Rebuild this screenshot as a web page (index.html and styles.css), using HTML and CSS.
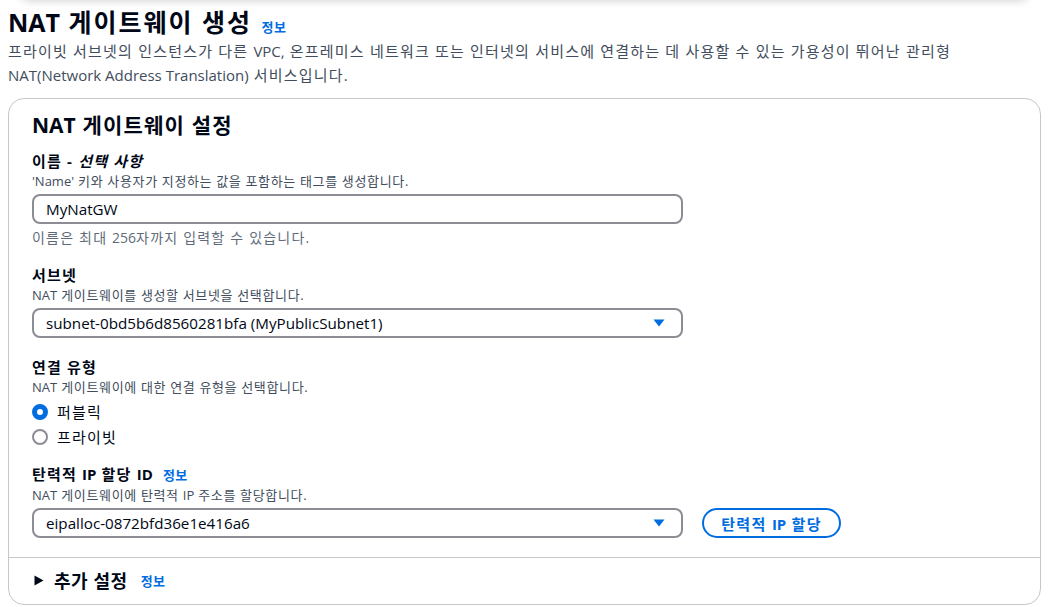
FILE: index.html
```html
<!DOCTYPE html>
<html lang="ko">
<head>
<meta charset="utf-8">
<link rel="stylesheet" href="styles.css">
</head>
<body>
<div class="page">
  <div class="top-shadow"></div>
  <header class="page-header">
    <h1 class="page-title"><span class="lat">NAT</span> 게이트웨이 생성 <a class="info" href="#">정보</a></h1>
    <p class="page-desc">프라이빗 서브넷의 인스턴스가 다른 <span class="lat">VPC,</span> 온프레미스 네트워크 또는 인터넷의 서비스에 연결하는 데 사용할 수 있는 가용성이 뛰어난 관리형 <span class="lat">NAT(Network Address Translation)</span> 서비스입니다.</p>
  </header>

  <section class="card">
    <div class="card-body">
      <h2 class="card-title"><span class="lat">NAT</span> 게이트웨이 설정</h2>

      <div class="field">
        <div class="label">이름 - <i>선택 사항</i></div>
        <div class="desc"><span class="lat">'Name'</span> 키와 사용자가 지정하는 값을 포함하는 태그를 생성합니다.</div>
        <div class="input"><span class="lat">MyNatGW</span></div>
        <div class="hint">이름은 최대 <span class="lat">256</span>자까지 입력할 수 있습니다.</div>
      </div>

      <div class="field">
        <div class="label">서브넷</div>
        <div class="desc"><span class="lat">NAT</span> 게이트웨이를 생성할 서브넷을 선택합니다.</div>
        <div class="input select">
          <span class="lat">subnet-0bd5b6d8560281bfa (MyPublicSubnet1)</span>
          <svg class="caret" width="12" height="8" viewBox="0 0 12 8"><path d="M0.5 0.5h11L6 7.5z" fill="#006ce0"/></svg>
        </div>
      </div>

      <div class="field">
        <div class="label">연결 유형</div>
        <div class="desc"><span class="lat">NAT</span> 게이트웨이에 대한 연결 유형을 선택합니다.</div>
        <div class="radios">
          <div class="radio"><span class="dot checked"></span>퍼블릭</div>
          <div class="radio"><span class="dot"></span>프라이빗</div>
        </div>
      </div>

      <div class="field">
        <div class="label">탄력적 <span class="lat">IP</span> 할당 <span class="lat">ID</span> <a class="info" href="#">정보</a></div>
        <div class="desc"><span class="lat">NAT</span> 게이트웨이에 탄력적 <span class="lat">IP</span> 주소를 할당합니다.</div>
        <div class="row">
          <div class="input select">
            <span class="lat">eipalloc-0872bfd36e1e416a6</span>
            <svg class="caret" width="12" height="8" viewBox="0 0 12 8"><path d="M0.5 0.5h11L6 7.5z" fill="#006ce0"/></svg>
          </div>
          <button class="btn">탄력적 <span class="lat">IP</span> 할당</button>
        </div>
      </div>
    </div>
    <div class="card-footer">
      <svg class="expand" width="10" height="11" viewBox="0 0 10 11"><path d="M0.5 0.5L9.5 5.5L0.5 10.5z" fill="#000716"/></svg>
      <span class="footer-title">추가 설정</span>
      <a class="info" href="#">정보</a>
    </div>
  </section>
</div>
</body>
</html>
```

FILE: styles.css
```css
* { box-sizing: border-box; }
html, body { margin: 0; padding: 0; background: #fff; }
body {
  font-family: "Open Sans", "Noto Sans CJK KR", sans-serif;
  color: #000716;
  font-size: 15px;
  letter-spacing: 0.08em;
}
.lat { letter-spacing: 0; }
.page { padding: 0 9px 0 8px; overflow: hidden; height: 607px; }
.top-shadow {
  height: 10px;
  margin: -10px 12px 0;
  border-radius: 0 0 16px 16px;
  box-shadow: 0 1px 8px rgba(0, 7, 22, 0.18);
}
.page-header { padding-top: 7px; }
.page-title {
  margin: 0;
  font-size: 25px;
  line-height: 30px;
  font-weight: 700;
  letter-spacing: 0.08em;
}
.info {
  color: #006ce0;
  font-size: 13px;
  font-weight: 700;
  text-decoration: none;
  margin-left: 5px;
  letter-spacing: 0.04em;
}
.page-title .info { margin-left: 1px; }
.page-desc {
  margin: -3px 0 0;
  color: #414d5c;
  font-size: 15px;
  line-height: 24px;
  max-width: 970px;
}
.card {
  margin-top: 11px;
  border: 1px solid #c6c6cd;
  border-radius: 16px;
}
.card-body { padding: 13px 23px 19px; }
.card-title {
  margin: 0 0 12px;
  font-size: 21px;
  line-height: 26px;
  font-weight: 700;
}
.field { margin-bottom: 18px; }
.field:last-child { margin-bottom: 0; }
.label {
  font-size: 15px;
  line-height: 22px;
  font-weight: 700;
}
.label i { font-style: italic; }
.desc {
  font-size: 13px;
  line-height: 16px;
  color: #414d5c;
  margin-top: 1px;
  letter-spacing: 0.05em;
}
.hint {
  font-size: 14px;
  line-height: 16px;
  color: #5f6b7a;
  margin-top: 6px;
}
.input {
  margin-top: 5px;
  width: 651px;
  height: 30px;
  border: 2px solid #8c8c94;
  border-radius: 8px;
  padding: 0 12px;
  display: flex;
  align-items: center;
  font-size: 15.2px;
}
.select { justify-content: space-between; padding-right: 16px; }
.caret { display: block; }
.radios { margin-top: 9px; display: flex; flex-direction: column; gap: 9px; }
.radio { display: flex; align-items: center; gap: 9px; font-size: 15px; line-height: 16px; }
.dot {
  width: 16px;
  height: 16px;
  border-radius: 50%;
  border: 2px solid #8c8c94;
  display: inline-block;
}
.dot.checked { border: 5px solid #006ce0; }
.row { display: flex; align-items: flex-end; gap: 19px; }
.btn {
  height: 30px;
  padding: 0;
  border: 2px solid #006ce0;
  border-radius: 20px;
  background: #fff;
  color: #006ce0;
  font-family: inherit;
  font-weight: 700;
  font-size: 15px;
  letter-spacing: 0.09em;
  width: 139px;
}
.card-footer {
  border-top: 1px solid #c6c6cd;
  padding: 11px 24px 12px;
  display: flex;
  align-items: center;
  height: 47px;
}
.expand { margin-right: 10px; margin-left: 1px; }
.footer-title { font-size: 18px; font-weight: 700; line-height: 22px; letter-spacing: 0.03em; }
.card-footer .info { margin-left: 13px; }
```
